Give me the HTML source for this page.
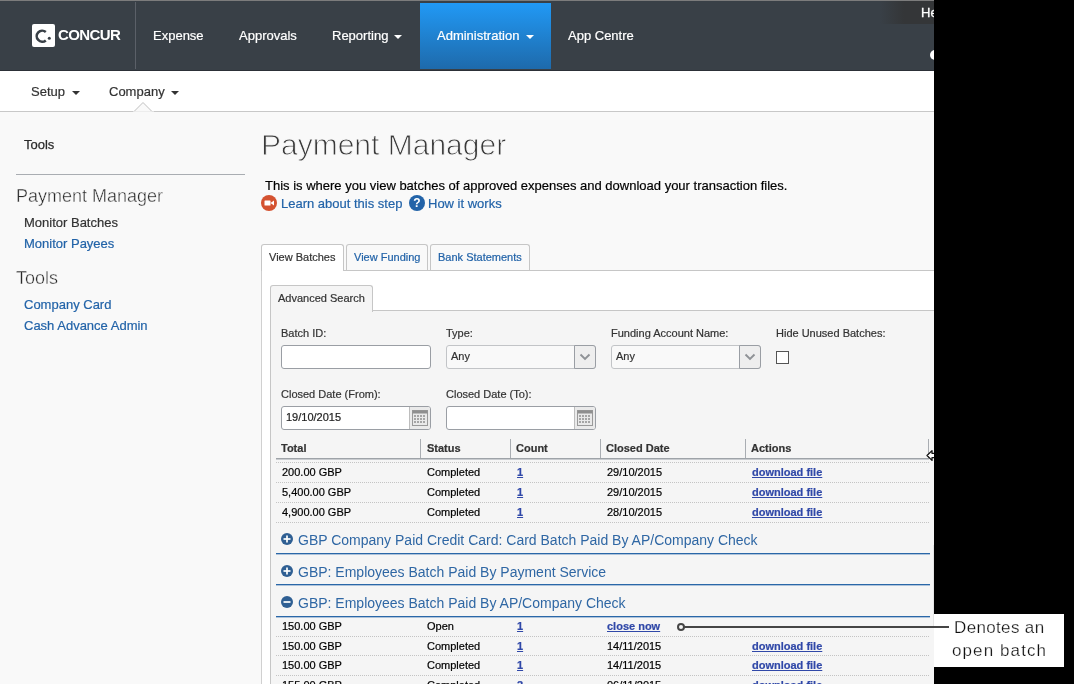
<!DOCTYPE html>
<html><head><meta charset="utf-8">
<style>
*{box-sizing:border-box}
html,body{margin:0;padding:0}
body{will-change:transform}
body{width:1074px;height:684px;overflow:hidden;position:relative;background:#f9f9f9;font-family:"Liberation Sans",sans-serif;color:#333}
.a{position:absolute;white-space:nowrap}
#topline{left:0;top:0;width:1074px;height:1px;background:#7c7c7c}
#nav{left:0;top:1px;width:1074px;height:70px;background:#394047;border-bottom:1px solid #2c3037}
.nt{color:#fff;font-size:13px;line-height:15px;-webkit-text-stroke:0.2px #fff}
.caret{display:inline-block;width:0;height:0;border-left:4px solid transparent;border-right:4px solid transparent;border-top:4px solid #fff;vertical-align:middle}
#sub{left:0;top:71px;width:1074px;height:41px;background:#fff;border-bottom:1px solid #c8c8c8}
.st{color:#333;font-size:13px;line-height:15px;-webkit-text-stroke:0.2px #333}
.caret2{display:inline-block;width:0;height:0;border-left:4px solid transparent;border-right:4px solid transparent;border-top:4px solid #333}
.lnk{color:#2263a8}
.t11{font-size:11px;line-height:13px;-webkit-text-stroke:0.2px currentColor}
.t13{font-size:13px;line-height:15px;-webkit-text-stroke:0.2px currentColor}
.dl{color:#3048a8;font-weight:bold;text-decoration:underline}
#black{left:934px;top:0;width:140px;height:684px;background:#000}
</style></head><body>
<div id="topline" class="a"></div>
<div id="nav" class="a">
  <!-- logo -->
  <div class="a" style="left:32px;top:23px;width:23px;height:23px;background:#fff;border-radius:2px"></div>
  <svg class="a" style="left:32px;top:23px" width="23" height="23" viewBox="0 0 23 23"><path d="M13.8 8.0 A5.5 5.5 0 1 0 13.8 16.4" fill="none" stroke="#394047" stroke-width="2.6"/><circle cx="17.3" cy="14.2" r="1.5" fill="#394047"/></svg>
  <div class="a" style="left:58px;top:25px;color:#fff;font-weight:bold;font-size:15px;line-height:17px;letter-spacing:-0.6px">CONCUR</div>
  <div class="a" style="left:135px;top:1px;width:1px;height:67px;background:#5b6068"></div>
  <div class="a nt" style="left:153px;top:27px">Expense</div>
  <div class="a nt" style="left:239px;top:27px">Approvals</div>
  <div class="a nt" style="left:332px;top:27px">Reporting <span class="caret" style="margin-left:2px"></span></div>
  <div class="a" style="left:420px;top:2px;width:131px;height:66px;background:linear-gradient(#2199f5,#1e6aab)"></div>
  <div class="a nt" style="left:437px;top:27px">Administration <span class="caret" style="margin-left:3px"></span></div>
  <div class="a nt" style="left:568px;top:27px">App Centre</div>
  <div class="a" style="left:880px;top:0;width:60px;height:23px;background:linear-gradient(90deg,rgba(50,52,55,0),#343638 40%)"></div>
  <div class="a" style="left:921px;top:4px;color:#fff;font-size:13px;line-height:15px;-webkit-text-stroke:0.3px #fff">He</div>
  <div class="a" style="left:930px;top:49px;width:10px;height:10px;border-radius:50%;background:#fff"></div>
</div>
<div id="sub" class="a">
  <div class="a st" style="left:31px;top:13px">Setup <span class="caret2" style="margin-left:3px;vertical-align:middle"></span></div>
  <div class="a st" style="left:109px;top:13px">Company <span class="caret2" style="margin-left:3px;vertical-align:middle"></span></div>
</div>

<!-- notch -->
<svg class="a" style="left:133px;top:101px" width="21" height="12" viewBox="0 0 21 12"><path d="M1 10.5 L10 1.5 L19 10.5" fill="#f9f9f9" stroke="#c0c0c0" stroke-width="1"/><rect x="0" y="10.5" width="21" height="2" fill="#f9f9f9"/></svg>
<!-- sidebar -->
<div class="a t13" style="left:24px;top:137px;color:#2a2a2a;-webkit-text-stroke:0.25px #2a2a2a">Tools</div>
<div class="a" style="left:16px;top:174px;width:229px;height:1px;background:#a9adb2"></div>
<div class="a" style="left:16px;top:186px;font-size:18px;line-height:20px;color:#2a2a2a;-webkit-text-stroke:0.4px #f9f9f9">Payment Manager</div>
<div class="a t13" style="left:24px;top:215px;color:#333">Monitor Batches</div>
<div class="a t13 lnk" style="left:24px;top:236px">Monitor Payees</div>
<div class="a" style="left:16px;top:268px;font-size:18px;line-height:20px;color:#2a2a2a;-webkit-text-stroke:0.4px #f9f9f9">Tools</div>
<div class="a t13 lnk" style="left:24px;top:297px">Company Card</div>
<div class="a t13 lnk" style="left:24px;top:318px">Cash Advance Admin</div>
<!-- main heading -->
<div class="a" style="left:261px;top:128px;font-size:30px;line-height:34px;color:#3a3a3a;-webkit-text-stroke:0.9px #f9f9f9">Payment Manager</div>
<div class="a t13" style="left:265px;top:178px;color:#000">This is where you view batches of approved expenses and download your transaction files.</div>
<div class="a" style="left:261px;top:195px;width:16px;height:16px;border-radius:50%;background:#d45230"></div>
<svg class="a" style="left:261px;top:195px" width="16" height="16" viewBox="0 0 16 16"><rect x="3.5" y="5.5" width="6" height="5" rx="0.5" fill="#fff"/><path d="M9.5 8 L13 5.5 L13 10.5 Z" fill="#fff"/></svg>
<div class="a t13 lnk" style="left:281px;top:196px">Learn about this step</div>
<div class="a" style="left:409px;top:195px;width:16px;height:16px;border-radius:50%;background:#2263a8;color:#fff;font-weight:bold;font-size:12px;line-height:16px;text-align:center">?</div>
<div class="a t13 lnk" style="left:428px;top:196px">How it works</div>
<!-- tabs -->
<div class="a" style="left:261px;top:270px;width:680px;height:420px;background:#fff;border-left:1px solid #d0d0d0;border-top:1px solid #c6c6c6"></div>
<div class="a" style="left:261px;top:244px;width:83px;height:27px;background:#fff;border:1px solid #c6c6c6;border-bottom:none;border-radius:3px 3px 0 0"></div>
<div class="a t11" style="left:269px;top:251px;color:#333">View Batches</div>
<div class="a" style="left:346px;top:244px;width:82px;height:26px;background:#f9f9f9;border:1px solid #c6c6c6;border-bottom:none;border-radius:3px 3px 0 0"></div>
<div class="a t11 lnk" style="left:354px;top:251px">View Funding</div>
<div class="a" style="left:430px;top:244px;width:100px;height:26px;background:#f9f9f9;border:1px solid #c6c6c6;border-bottom:none;border-radius:3px 3px 0 0"></div>
<div class="a t11 lnk" style="left:438px;top:251px">Bank Statements</div>
<!-- advanced search panel -->
<div class="a" style="left:270px;top:310px;width:680px;height:380px;background:#f5f5f5;border-left:1px solid #c6c6c6;border-top:1px solid #c6c6c6"></div>
<div class="a" style="left:270px;top:285px;width:103px;height:27px;background:#f5f5f5;border:1px solid #c6c6c6;border-bottom:none;border-radius:3px 3px 0 0"></div>
<div class="a t11" style="left:278px;top:292px;color:#333">Advanced Search</div>

<!-- form -->
<div class="a t11" style="left:281px;top:327px;color:#333">Batch ID:</div>
<div class="a" style="left:281px;top:345px;width:150px;height:24px;background:#fff;border:1px solid #9a9ea4;border-radius:3px"></div>
<div class="a t11" style="left:446px;top:327px;color:#333">Type:</div>
<div class="a" style="left:446px;top:345px;width:150px;height:24px;background:#f9f9f9;border:1px solid #c2c4c7;border-radius:3px"></div><div class="a" style="left:574px;top:345px;width:22px;height:24px;background:#eeeeee;border:1px solid #9a9ea4;border-radius:0 3px 3px 0"></div>
<div class="a t11" style="left:451px;top:350px;color:#333">Any</div>
<svg class="a" style="left:579px;top:353px" width="12" height="8" viewBox="0 0 12 8"><path d="M1.5 1.5 L6 6 L10.5 1.5" fill="none" stroke="#8f9296" stroke-width="1.9"/></svg>
<div class="a t11" style="left:611px;top:327px;color:#333">Funding Account Name:</div>
<div class="a" style="left:611px;top:345px;width:150px;height:24px;background:#f9f9f9;border:1px solid #c2c4c7;border-radius:3px"></div><div class="a" style="left:739px;top:345px;width:22px;height:24px;background:#eeeeee;border:1px solid #9a9ea4;border-radius:0 3px 3px 0"></div>
<div class="a t11" style="left:616px;top:350px;color:#333">Any</div>
<svg class="a" style="left:744px;top:353px" width="12" height="8" viewBox="0 0 12 8"><path d="M1.5 1.5 L6 6 L10.5 1.5" fill="none" stroke="#8f9296" stroke-width="1.9"/></svg>
<div class="a t11" style="left:776px;top:327px;color:#333">Hide Unused Batches:</div>
<div class="a" style="left:776px;top:351px;width:13px;height:13px;background:#fff;border:1px solid #555"></div>
<div class="a t11" style="left:281px;top:388px;color:#333">Closed Date (From):</div>
<div class="a" style="left:281px;top:406px;width:150px;height:24px;background:#fff;border:1px solid #9a9ea4;border-radius:3px;overflow:hidden"><div class="a" style="left:127px;top:0;width:21px;height:22px;background:#eaeaea;border-left:1px solid #bdbdbd"></div></div>
<div class="a t11" style="left:286px;top:411px;color:#222">19/10/2015</div>
<svg class="a" style="left:412px;top:410px" width="16" height="16" viewBox="0 0 16 16"><rect x="0.5" y="0.5" width="15" height="15" fill="#e9e9e9" stroke="#9a9a9a"/><rect x="0.5" y="0.5" width="15" height="3" fill="#8f8f8f"/><g fill="#a5a5a5"><rect x="2" y="5" width="2" height="2"/><rect x="5" y="5" width="2" height="2"/><rect x="8" y="5" width="2" height="2"/><rect x="11" y="5" width="2" height="2"/><rect x="2" y="8" width="2" height="2"/><rect x="5" y="8" width="2" height="2"/><rect x="8" y="8" width="2" height="2"/><rect x="11" y="8" width="2" height="2"/><rect x="2" y="11" width="2" height="2"/><rect x="5" y="11" width="2" height="2"/><rect x="8" y="11" width="2" height="2"/><rect x="11" y="11" width="2" height="2"/></g></svg>
<div class="a t11" style="left:446px;top:388px;color:#333">Closed Date (To):</div>
<div class="a" style="left:446px;top:406px;width:150px;height:24px;background:#fff;border:1px solid #9a9ea4;border-radius:3px;overflow:hidden"><div class="a" style="left:127px;top:0;width:21px;height:22px;background:#eaeaea;border-left:1px solid #bdbdbd"></div></div>
<svg class="a" style="left:577px;top:410px" width="16" height="16" viewBox="0 0 16 16"><rect x="0.5" y="0.5" width="15" height="15" fill="#e9e9e9" stroke="#9a9a9a"/><rect x="0.5" y="0.5" width="15" height="3" fill="#8f8f8f"/><g fill="#a5a5a5"><rect x="2" y="5" width="2" height="2"/><rect x="5" y="5" width="2" height="2"/><rect x="8" y="5" width="2" height="2"/><rect x="11" y="5" width="2" height="2"/><rect x="2" y="8" width="2" height="2"/><rect x="5" y="8" width="2" height="2"/><rect x="8" y="8" width="2" height="2"/><rect x="11" y="8" width="2" height="2"/><rect x="2" y="11" width="2" height="2"/><rect x="5" y="11" width="2" height="2"/><rect x="8" y="11" width="2" height="2"/><rect x="11" y="11" width="2" height="2"/></g></svg>

<!-- table -->
<div class="a" style="left:276px;top:458px;width:653px;height:1px;background:#9ea3a8"></div>
<div class="a" style="left:276px;top:459px;width:653px;height:1px;background:#c9ccd0"></div>
<div class="a" style="left:420px;top:439px;width:1px;height:19px;background:#a9adb2"></div>
<div class="a" style="left:510px;top:439px;width:1px;height:19px;background:#a9adb2"></div>
<div class="a" style="left:600px;top:439px;width:1px;height:19px;background:#a9adb2"></div>
<div class="a" style="left:745px;top:439px;width:1px;height:19px;background:#a9adb2"></div>
<div class="a" style="left:928px;top:439px;width:1px;height:19px;background:#a9adb2"></div>
<svg class="a" style="left:924px;top:449px" width="12" height="13" viewBox="0 0 12 13"><path d="M3 6.5 L8 1.6 L8 4.3 L11 4.3 L11 8.7 L8 8.7 L8 11.4 Z" fill="#fff" stroke="#111" stroke-width="1.3" stroke-linejoin="round"/></svg>
<div class="a t11" style="left:281px;top:442px;font-weight:bold;color:#333">Total</div>
<div class="a t11" style="left:427px;top:442px;font-weight:bold;color:#333">Status</div>
<div class="a t11" style="left:516px;top:442px;font-weight:bold;color:#333">Count</div>
<div class="a t11" style="left:606px;top:442px;font-weight:bold;color:#333">Closed Date</div>
<div class="a t11" style="left:751px;top:442px;font-weight:bold;color:#333">Actions</div>
<div class="a" style="left:276px;top:462px;width:654px;height:1px;background:repeating-linear-gradient(90deg,#c4c4c4 0 1px,transparent 1px 2px)"></div>
<div class="a t11" style="left:282px;top:466px;color:#000">200.00 GBP</div>
<div class="a t11" style="left:427px;top:466px;color:#000">Completed</div>
<div class="a t11 dl" style="left:517px;top:466px">1</div>
<div class="a t11" style="left:607px;top:466px;color:#000">29/10/2015</div>
<div class="a t11 dl" style="left:752px;top:466px">download file</div>
<div class="a" style="left:276px;top:482px;width:654px;height:1px;background:repeating-linear-gradient(90deg,#c4c4c4 0 1px,transparent 1px 2px)"></div>
<div class="a t11" style="left:282px;top:486px;color:#000">5,400.00 GBP</div>
<div class="a t11" style="left:427px;top:486px;color:#000">Completed</div>
<div class="a t11 dl" style="left:517px;top:486px">1</div>
<div class="a t11" style="left:607px;top:486px;color:#000">29/10/2015</div>
<div class="a t11 dl" style="left:752px;top:486px">download file</div>
<div class="a" style="left:276px;top:502px;width:654px;height:1px;background:repeating-linear-gradient(90deg,#c4c4c4 0 1px,transparent 1px 2px)"></div>
<div class="a t11" style="left:282px;top:506px;color:#000">4,900.00 GBP</div>
<div class="a t11" style="left:427px;top:506px;color:#000">Completed</div>
<div class="a t11 dl" style="left:517px;top:506px">1</div>
<div class="a t11" style="left:607px;top:506px;color:#000">28/10/2015</div>
<div class="a t11 dl" style="left:752px;top:506px">download file</div>
<div class="a" style="left:276px;top:522px;width:654px;height:1px;background:repeating-linear-gradient(90deg,#c4c4c4 0 1px,transparent 1px 2px)"></div>
<svg class="a" style="left:281px;top:533px" width="12" height="12" viewBox="0 0 12 12"><circle cx="6" cy="6" r="6" fill="#2f5f93"/><rect x="2.5" y="5.15" width="7" height="1.7" fill="#fff"/><rect x="5.15" y="2.5" width="1.7" height="7" fill="#fff"/></svg>
<div class="a" style="left:298px;top:532px;font-size:14px;line-height:16px;color:#2f67a4">GBP Company Paid Credit Card: Card Batch Paid By AP/Company Check</div>
<div class="a" style="left:276px;top:553px;width:654px;height:1px;background:#2a67a8;box-shadow:0 1px 0 rgba(42,103,168,0.35)"></div>
<svg class="a" style="left:281px;top:565px" width="12" height="12" viewBox="0 0 12 12"><circle cx="6" cy="6" r="6" fill="#2f5f93"/><rect x="2.5" y="5.15" width="7" height="1.7" fill="#fff"/><rect x="5.15" y="2.5" width="1.7" height="7" fill="#fff"/></svg>
<div class="a" style="left:298px;top:564px;font-size:14px;line-height:16px;color:#2f67a4">GBP: Employees Batch Paid By Payment Service</div>
<div class="a" style="left:276px;top:584px;width:654px;height:1px;background:#2a67a8;box-shadow:0 1px 0 rgba(42,103,168,0.35)"></div>
<svg class="a" style="left:281px;top:596px" width="12" height="12" viewBox="0 0 12 12"><circle cx="6" cy="6" r="6" fill="#2f5f93"/><rect x="2.5" y="5.15" width="7" height="1.7" fill="#fff"/></svg>
<div class="a" style="left:298px;top:595px;font-size:14px;line-height:16px;color:#2f67a4">GBP: Employees Batch Paid By AP/Company Check</div>
<div class="a" style="left:276px;top:616px;width:654px;height:1px;background:#2a67a8;box-shadow:0 1px 0 rgba(42,103,168,0.35)"></div>
<div class="a t11" style="left:282px;top:620px;color:#000">150.00 GBP</div>
<div class="a t11" style="left:427px;top:620px;color:#000">Open</div>
<div class="a t11 dl" style="left:517px;top:620px">1</div>
<div class="a t11 dl" style="left:607px;top:620px">close now</div>
<div class="a" style="left:276px;top:636px;width:654px;height:1px;background:repeating-linear-gradient(90deg,#c4c4c4 0 1px,transparent 1px 2px)"></div>
<div class="a t11" style="left:282px;top:640px;color:#000">150.00 GBP</div>
<div class="a t11" style="left:427px;top:640px;color:#000">Completed</div>
<div class="a t11 dl" style="left:517px;top:640px">1</div>
<div class="a t11" style="left:607px;top:640px;color:#000">14/11/2015</div>
<div class="a t11 dl" style="left:752px;top:640px">download file</div>
<div class="a" style="left:276px;top:655px;width:654px;height:1px;background:repeating-linear-gradient(90deg,#c4c4c4 0 1px,transparent 1px 2px)"></div>
<div class="a t11" style="left:282px;top:659px;color:#000">150.00 GBP</div>
<div class="a t11" style="left:427px;top:659px;color:#000">Completed</div>
<div class="a t11 dl" style="left:517px;top:659px">1</div>
<div class="a t11" style="left:607px;top:659px;color:#000">14/11/2015</div>
<div class="a t11 dl" style="left:752px;top:659px">download file</div>
<div class="a" style="left:276px;top:675px;width:654px;height:1px;background:repeating-linear-gradient(90deg,#c4c4c4 0 1px,transparent 1px 2px)"></div>
<div class="a t11" style="left:282px;top:679px;color:#000">155.00 GBP</div>
<div class="a t11" style="left:427px;top:679px;color:#000">Completed</div>
<div class="a t11 dl" style="left:517px;top:679px">2</div>
<div class="a t11" style="left:607px;top:679px;color:#000">06/11/2015</div>
<div class="a t11 dl" style="left:752px;top:679px">download file</div>
<div class="a" style="left:933px;top:545px;width:1px;height:81px;background:#e4e4e4"></div>
<div id="black" class="a"></div>

<!-- callout -->
<div class="a" style="left:934px;top:614px;width:130px;height:53px;background:#fff"></div>
<div class="a" style="left:684px;top:626px;width:265px;height:2px;background:#454545"></div>
<div class="a" style="left:677px;top:623px;width:8px;height:8px;border:2px solid #454545;border-radius:50%;background:#f5f5f5"></div>
<div class="a" style="left:954px;top:618px;font-size:17px;line-height:19px;letter-spacing:0.35px;color:#111;-webkit-text-stroke:0.25px #fff">Denotes an</div>
<div class="a" style="left:952px;top:641px;font-size:17px;line-height:19px;letter-spacing:1.1px;color:#111;-webkit-text-stroke:0.25px #fff">open batch</div>
</body></html>
